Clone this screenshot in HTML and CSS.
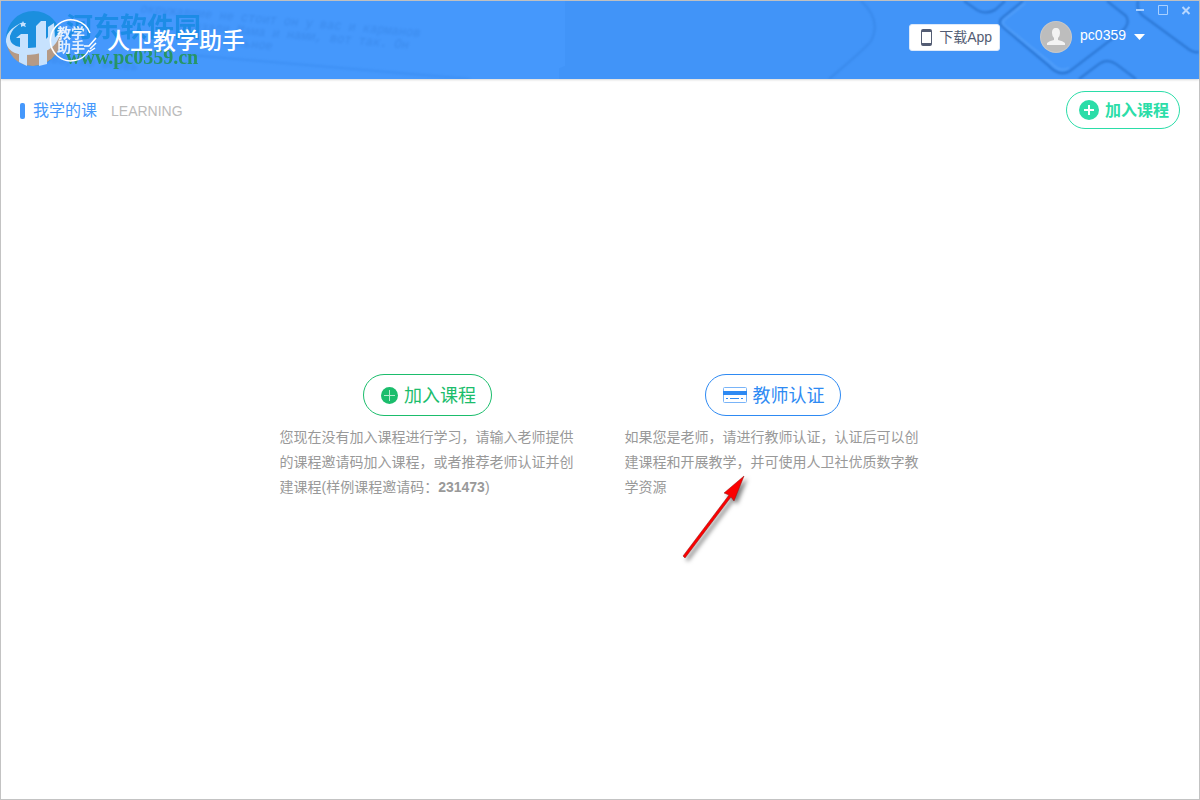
FILE: index.html
```html
<!DOCTYPE html>
<html lang="zh-CN">
<head>
<meta charset="utf-8">
<title>人卫教学助手</title>
<link rel="stylesheet" href="styles.css">
</head>
<body>
<div class="window">
  <header class="topbar">
    <svg class="texture texture-left" width="570" height="78" viewBox="1 1 570 78" aria-hidden="true">
      <g class="print" transform="rotate(5 250 20)">
        <text x="140" y="22">окружавшие не стоит он у вас и карманов</text>
        <text x="180" y="35">сказали Мама и нами, вот так. Он</text>
        <text x="210" y="48">остальное</text>
        <text x="20" y="80">и снова, но вновь</text>
      </g>
      <path class="fold" d="M190 55L470 79"/>
    </svg>
    <svg class="texture texture-right" width="640" height="78" viewBox="560 1 640 78" aria-hidden="true">
      <path class="shade" d="M566 1H1200V79H530L566 66Z"/>
      <path class="key faint" d="M862 1Q883 20 872 41Q867 48 830 79"/>
      <path class="key" d="M965 1L978 10Q986 15 996 10L1006 1"/>
      <path class="key" d="M1024 1L1003 18Q998 23 1005 28L1050 66Q1060 77 1071 71L1122 32Q1132 24 1127 16L1108 1"/>
      <path class="key" d="M1080 79L1100 64Q1108 58 1117 64L1137 79"/>
      <path class="key" d="M1139 1Q1137 9 1143 15L1188 48Q1194 53 1200 52"/>
      <path class="glow" d="M1026 3L1006 19Q1001 23 1007 27L1053 64Q1061 73 1070 68"/>
    </svg>

    <div class="watermark">
      <svg width="60" height="58" viewBox="0 0 60 58" aria-hidden="true">
        <circle cx="28.500" cy="28.500" r="27.500" fill="#168edb"/>
        <path fill="#c59b76" d="M2 36Q16 45 33 41Q49 36 55 22Q58 34 51 44Q42 56 28 56Q8 55 2 36Z"/>
        <path fill="#d9edff" d="M18 12Q0 20 1 32Q3 44 20 45Q42 45 51 33Q55 27 57 17Q50 32 37 36Q23 40 11 36Q4 33 5 26Q7 18 18 12Z"/>
        <path fill="#d9edff" d="M11 28L16 24H23V38H15V28ZM31 16L36 11H41V29L43 27V17L49 13L50 29L42 39V54L34 56V40H31ZM14 42H22V56L14 52Z"/>
        <path fill="#d9edff" d="M18 11L19 13H21L20 15L21 17L18 16L16 17L16 15L15 13H17Z"/>
      </svg>
      <div class="watermark-words">
        <span class="watermark-name">河东软件园</span>
        <span class="watermark-site">www.pc0359.cn</span>
      </div>
    </div>

    <div class="brand">
      <svg class="brand-mark" width="48" height="46" viewBox="0 0 48 46" aria-hidden="true">
        <g fill="none" stroke="#fff" stroke-width="1.500">
          <path d="M41 15A20.500 20.500 0 1 0 40 32"/>
          <path d="M35 28H40L47 20M41 31L47 25M40 34L46 30"/>
        </g>
        <text x="8" y="20">教学</text>
        <text x="8" y="34">助手</text>
      </svg>
      <h1 class="brand-name">人卫教学助手</h1>
    </div>

    <div class="account">
      <button class="download" type="button">
        <svg width="11" height="17" viewBox="0 0 11 17" aria-hidden="true"><path fill="#535c73" fill-rule="evenodd" d="M2 0H9Q11 0 11 2V15Q11 17 9 17H2Q0 17 0 15V2Q0 0 2 0ZM1 3V14H10V3Z"/></svg>
        <span>下载App</span>
      </button>
      <button class="user" type="button">
        <svg width="32" height="32" viewBox="0 0 32 32" aria-hidden="true"><circle cx="16" cy="16" r="16" fill="#c8c8c8"/><circle cx="16" cy="16" r="15" fill="#bdbdbd"/><path fill="#f3f3f3" d="M16 7C19 7 20 9 20 12Q20 15 18 17V19Q23 20 25 22V24H7V22Q9 20 14 19V17Q12 15 12 12C12 9 13 7 16 7Z"/></svg>
        <span class="user-name">pc0359</span>
        <svg width="11" height="6" viewBox="0 0 11 6" aria-hidden="true"><path fill="#fff" d="M0 0H11L5.500 6Z"/></svg>
      </button>
    </div>

    <div class="controls">
      <button type="button" aria-label="最小化"><svg width="11" height="11" viewBox="0 0 11 11"><path d="M1 6H9" stroke="#a9d0ff" stroke-width="2"/></svg></button>
      <button type="button" aria-label="最大化"><svg width="11" height="11" viewBox="0 0 11 11"><path d="M.5 1.500H9.500V10.500H.5Z" fill="none" stroke="#a9d0ff"/></svg></button>
      <button type="button" aria-label="关闭"><svg width="11" height="11" viewBox="0 0 11 11"><path d="M1.500 3L8.500 10M8.500 3L1.500 10" stroke="#b5d6ff" stroke-width="2"/></svg></button>
    </div>
  </header>

  <main class="content">
    <div class="section-head">
      <h2 class="section-title">我学的课 <small>LEARNING</small></h2>
      <button class="pill pill-mint" type="button">
        <svg width="20" height="20" viewBox="0 0 20 20" aria-hidden="true"><circle cx="10" cy="10" r="10" fill="#2bdda8"/><path d="M5 10H15M10 5V15" stroke="#fff" stroke-width="2"/></svg>
        <span>加入课程</span>
      </button>
    </div>

    <div class="choices">
      <section class="choice">
        <button class="pill pill-green" type="button">
          <svg width="17" height="17" viewBox="0 0 17 17" aria-hidden="true"><circle cx="8.500" cy="8.500" r="8.500" fill="#1bbd6c"/><path d="M3 8.500H14M8.500 3V14" stroke="#b5ebcf"/></svg>
          <span>加入课程</span>
        </button>
        <p>您现在没有加入课程进行学习，请输入老师提供的课程邀请码加入课程，或者推荐老师认证并创建课程(样例课程邀请码：<b>231473</b>)</p>
      </section>
      <section class="choice">
        <button class="pill pill-blue" type="button">
          <svg width="24" height="16" viewBox="0 0 24 16" aria-hidden="true"><rect x=".5" y=".5" width="23" height="15" rx="1" fill="#fff" stroke="#79b4f8"/><path fill="#2e8af3" d="M0 4H24V8H0Z"/><path d="M3 11.500H5M7 11.500H16M18 11.500H20" stroke="#2e8af3"/></svg>
          <span>教师认证</span>
        </button>
        <p>如果您是老师，请进行教师认证，认证后可以创建课程和开展教学，并可使用人卫社优质数字教学资源</p>
        <svg class="arrow" width="76" height="96" viewBox="0 0 76 96" aria-hidden="true">
          <path fill="#fb0000" stroke="#8d1010" stroke-width=".5" d="M65 5L45 22L50 24L4 85L6 87L52 26L55 30Z"/>
        </svg>
      </section>
    </div>
  </main>
</div>
</body>
</html>
```
FILE: styles.css
```css
* { box-sizing: border-box; }
body {
  margin: 0;
  font-family: "Liberation Sans", "Noto Sans CJK SC", sans-serif;
  font-size: 14px;
  color: #999;
  background: #fff;
}
button {
  font: inherit;
  color: inherit;
  background: none;
  border: 0;
  padding: 0;
  cursor: pointer;
}
svg { display: block; flex: none; }
.window {
  display: flex;
  flex-direction: column;
  min-height: 100vh;
  border: 1px solid #c3c3c3;
}
.topbar {
  position: relative;
  display: flex;
  align-items: center;
  justify-content: space-between;
  height: 78px;
  padding: 0 54px 0 48px;
  background: #4598fc;
  box-shadow: 0 1px 2px rgba(0, 0, 0, .16);
  overflow: hidden;
  color: #fff;
}
.texture { position: absolute; top: 0; }
.texture-left { left: 0; }
.texture-right { right: 0; }
.print {
  font: italic 12px "Liberation Mono", monospace;
  fill: #2268c4;
  opacity: .28;
  filter: blur(1px);
}
.fold, .key, .glow { fill: none; stroke-width: 2; filter: blur(1px); }
.fold { stroke: #2878db; opacity: .25; }
.key { stroke: #2068c2; opacity: .75; }
.key.faint { opacity: .25; }
.glow { stroke: #6db2ff; opacity: .4; }
.shade { fill: #3c8ef2; opacity: .4; }
.brand, .account { position: relative; display: flex; }
.brand { align-items: center; gap: 10px; padding-top: 2px; }
.brand-mark text {
  font: 700 14px "Noto Sans CJK SC", sans-serif;
  fill: #fff;
  opacity: .85;
}
.brand-name {
  margin: 0;
  font-size: 23px;
  line-height: 32px;
  font-weight: 500;
}
.account { align-items: center; gap: 40px; padding-bottom: 6px; }
.download {
  display: flex;
  align-items: center;
  gap: 7px;
  height: 27px;
  padding: 0 7px 0 11px;
  border: 1px solid #dce9fa;
  border-radius: 3px;
  background: #fff;
  color: #535c73;
  line-height: 20px;
}
.user { display: flex; align-items: center; gap: 8px; }
.user-name { line-height: 20px; padding-bottom: 4px; }
.controls {
  position: absolute;
  top: 3px;
  right: 7px;
  display: flex;
  gap: 12px;
}
.watermark {
  position: absolute;
  top: 9px;
  left: 4px;
  display: flex;
  gap: 1px;
  opacity: .88;
  pointer-events: none;
}
.watermark-words { display: flex; flex-direction: column; }
.watermark-name {
  font-size: 27px;
  line-height: 36px;
  font-weight: 700;
  color: #188be4;
}
.watermark-site {
  font: 700 20px/22px "Liberation Serif", serif;
  color: #239553;
}
.content { display: flex; flex: 1; flex-direction: column; }
.section-head {
  display: flex;
  align-items: center;
  justify-content: space-between;
  padding: 12px 19px 0;
}
.section-title {
  display: flex;
  align-items: center;
  margin: 0;
  padding-top: 2px;
  font-size: 16px;
  line-height: 24px;
  font-weight: 400;
  color: #4598fc;
}
.section-title::before {
  content: "";
  width: 5px;
  height: 16px;
  margin-right: 8px;
  border-radius: 2px;
  background: #4598fc;
}
.section-title small { margin-left: 14px; font-size: 14px; color: #bbb; }
.pill {
  display: flex;
  align-items: center;
  justify-content: center;
  gap: 6px;
  border: 1px solid currentColor;
  border-radius: 21px;
  background: #fff;
}
.pill span { padding-bottom: 3px; }
.pill-mint {
  height: 38px;
  padding: 0 10px 0 12px;
  font-size: 16px;
  font-weight: 700;
  color: #2bdda8;
}
.pill-green, .pill-blue { height: 42px; padding: 0 15px 0 17px; font-size: 18px; }
.pill-green { color: #1bbd6c; }
.pill-blue { color: #2e8af3; }
.choices {
  display: flex;
  flex: 1;
  align-items: center;
  justify-content: center;
  gap: 49px;
  padding-bottom: 54px;
}
.choice {
  position: relative;
  display: flex;
  flex-direction: column;
  align-items: center;
  width: 296px;
}
.choice p { margin: 9px 0 0; width: 100%; line-height: 25px; }
.arrow {
  position: absolute;
  top: 97px;
  left: 54px;
  filter: drop-shadow(3px 3px 2px rgba(0, 0, 0, .5));
}
```
